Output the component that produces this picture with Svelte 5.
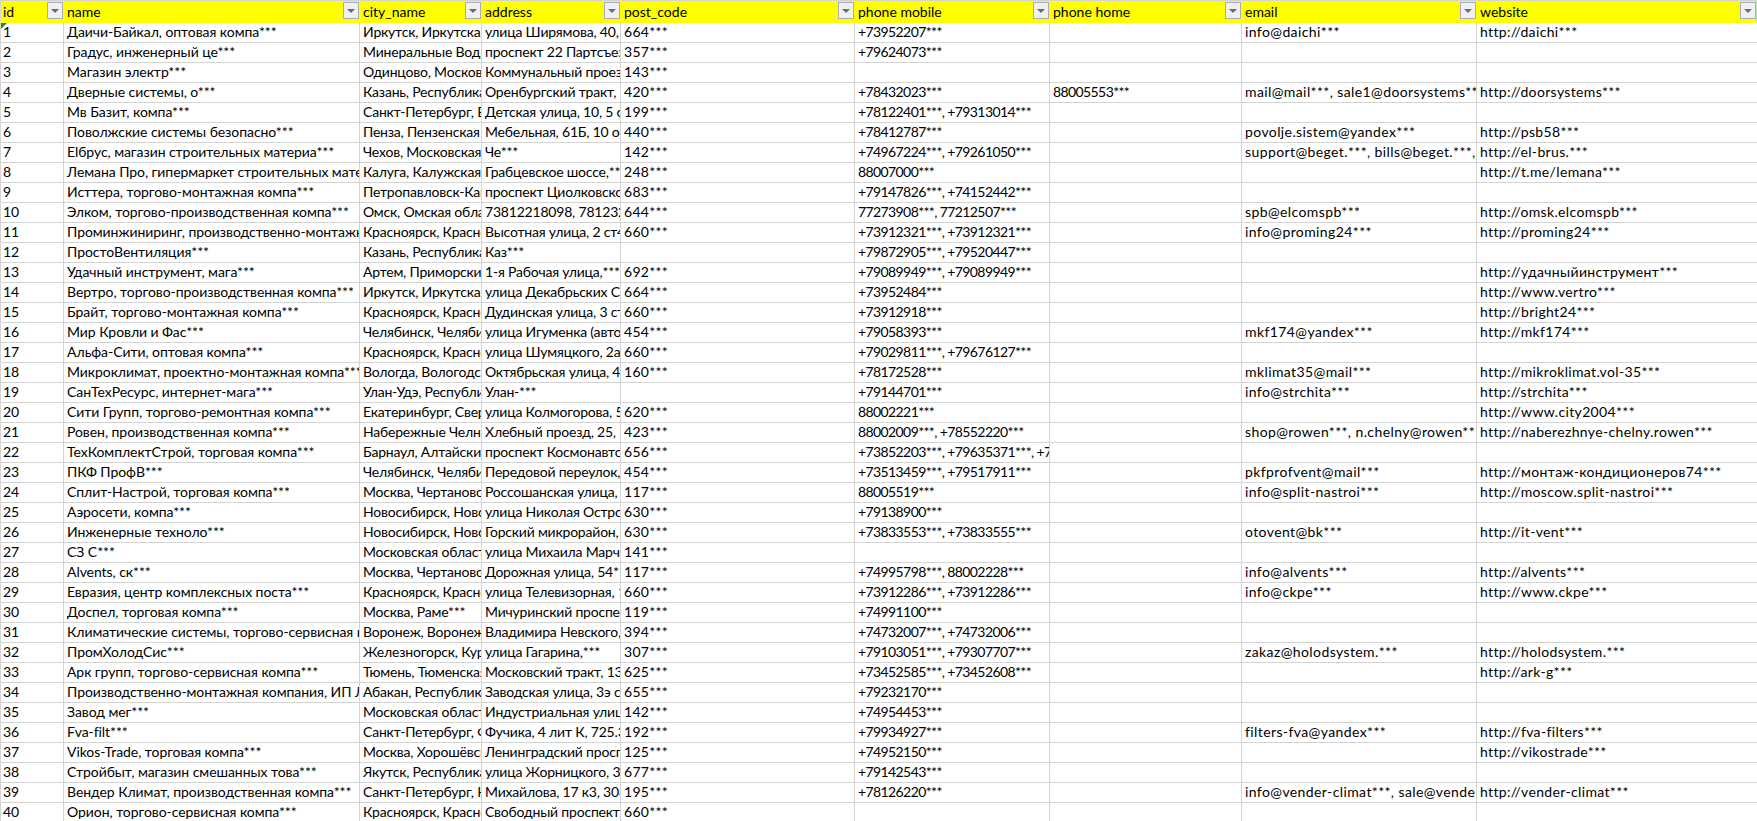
<script lang="ts">
	const columns = [
		{ key: 'id', width: 64, kind: 'plain' },
		{ key: 'name', width: 296, kind: 'title' },
		{ key: 'city_name', width: 122, kind: 'tight' },
		{ key: 'address', width: 139, kind: 'tight' },
		{ key: 'post_code', width: 234, kind: 'code' },
		{ key: 'phone mobile', width: 195, kind: 'phone' },
		{ key: 'phone home', width: 192, kind: 'phone' },
		{ key: 'email', width: 235, kind: 'mail' },
		{ key: 'website', width: 280, kind: 'site' }
	];

	// name | city | address | post | mobile | home | email | website
	const raw = `Даичи-Байкал, оптовая компа***|Иркутск, Иркутская о|улица Ширямова, 40, о|664***|+73952207***||info@daichi***|http://daichi***
Градус, инженерный це***|Минеральные Воды|проспект 22 Партсъезд|357***|+79624073***|||
Магазин электр***|Одинцово, Московская|Коммунальный проезд|143***||||
Дверные системы, о***|Казань, Республика Т|Оренбургский тракт, 1|420***|+78432023***|88005553***|mail@mail***, sale1@doorsystems***|http://doorsystems***
Мв Базит, компа***|Санкт-Петербург, В|Детская улица, 10, 5 ст|199***|+78122401***, +79313014***|||
Поволжские системы безопасно***|Пенза, Пензенская об|Мебельная, 61Б, 10 оф|440***|+78412787***||povolje.sistem@yandex***|http://psb58***
Elбрус, магазин строительных материа***|Чехов, Московская о|Че***|142***|+74967224***, +79261050***||support@beget.***, bills@beget.***, |http://el-brus.***
Лемана Про, гипермаркет строительных матер|Калуга, Калужская о|Грабцевское шоссе,***|248***|88007000***|||http://t.me/lemana***
Исттера, торгово-монтажная компа***|Петропавловск-Камч|проспект Циолковского|683***|+79147826***, +74152442***|||
Элком, торгово-производственная компа***|Омск, Омская област|73812218098, 78123208|644***|77273908***, 77212507***||spb@elcomspb***|http://omsk.elcomspb***
Проминжиниринг, производственно-монтажная|Красноярск, Красноя|Высотная улица, 2 ст4|660***|+73912321***, +73912321***||info@proming24***|http://proming24***
ПростоВентиляция***|Казань, Республика Т|Каз***||+79872905***, +79520447***|||
Удачный инструмент, мага***|Артем, Приморский к|1-я Рабочая улица,***|692***|+79089949***, +79089949***|||http://удачныйинструмент***
Вертро, торгово-производственная компа***|Иркутск, Иркутская о|улица Декабрьских Со|664***|+73952484***|||http://www.vertro***
Брайт, торгово-монтажная компа***|Красноярск, Красноя|Дудинская улица, 3 ст|660***|+73912918***|||http://bright24***
Мир Кровли и Фас***|Челябинск, Челябинс|улица Игуменка (автов|454***|+79058393***||mkf174@yandex***|http://mkf174***
Альфа-Сити, оптовая компа***|Красноярск, Красноя|улица Шумяцкого, 2а,|660***|+79029811***, +79676127***|||
Микроклимат, проектно-монтажная компа***|Вологда, Вологодска|Октябрьская улица, 4 |160***|+78172528***||mklimat35@mail***|http://mikroklimat.vol-35***
СанТехРесурс, интернет-мага***|Улан-Удэ, Республик|Улан-***||+79144701***||info@strchita***|http://strchita***
Сити Групп, торгово-ремонтная компа***|Екатеринбург, Сверд|улица Колмогорова, 5|620***|88002221***|||http://www.city2004***
Ровен, производственная компа***|Набережные Челны|Хлебный проезд, 25, к|423***|88002009***, +78552220***||shop@rowen***, n.chelny@rowen***|http://naberezhnye-chelny.rowen***
ТехКомплектСтрой, торговая компа***|Барнаул, Алтайский к|проспект Космонавтов|656***|+73852203***, +79635371***, +79|||
ПКФ ПрофВ***|Челябинск, Челябинс|Передовой переулок, |454***|+73513459***, +79517911***||pkfprofvent@mail***|http://монтаж-кондиционеров74***
Сплит-Настрой, торговая компа***|Москва, Чертановска|Россошанская улица, |117***|88005519***||info@split-nastroi***|http://moscow.split-nastroi***
Аэросети, компа***|Новосибирск, Новоси|улица Николая Остров|630***|+79138900***|||
Инженерные техноло***|Новосибирск, Новоси|Горский микрорайон, |630***|+73833553***, +73833555***||otovent@bk***|http://it-vent***
СЗ С***|Московская область|улица Михаила Марчу|141***||||
Alvents, ск***|Москва, Чертановска|Дорожная улица, 54***|117***|+74995798***, 88002228***||info@alvents***|http://alvents***
Евразия, центр комплексных поста***|Красноярск, Красноя|улица Телевизорная, 1|660***|+73912286***, +73912286***||info@ckpe***|http://www.ckpe***
Доспел, торговая компа***|Москва, Раме***|Мичуринский проспек|119***|+74991100***|||
Климатические системы, торгово-сервисная ко|Воронеж, Воронежска|Владимира Невского, |394***|+74732007***, +74732006***|||
ПромХолодСис***|Железногорск, Курск|улица Гагарина,***|307***|+79103051***, +79307707***||zakaz@holodsystem.***|http://holodsystem.***
Арк групп, торгово-сервисная компа***|Тюмень, Тюменская о|Московский тракт, 134|625***|+73452585***, +73452608***|||http://ark-g***
Производственно-монтажная компания, ИП Ла|Абакан, Республика Х|Заводская улица, 3э ст|655***|+79232170***|||
Завод мег***|Московская область|Индустриальная улица|142***|+74954453***|||
Fva-filt***|Санкт-Петербург, Фр|Фучика, 4 лит К, 725.3|192***|+79934927***||filters-fva@yandex***|http://fva-filters***
Vikos-Trade, торговая компа***|Москва, Хорошёвский|Ленинградский просп|125***|+74952150***|||http://vikostrade***
Стройбыт, магазин смешанных това***|Якутск, Республика С|улица Жорницкого, 3|677***|+79142543***|||
Вендер Климат, производственная компа***|Санкт-Петербург, Не|Михайлова, 17 к3, 308|195***|+78126220***||info@vender-climat***, sale@vender-climat***|http://vender-climat***
Орион, торгово-сервисная компа***|Красноярск, Красноя|Свободный проспект, |660***||||`;

	const rows = raw.split('\n').map((line, i) => [String(i + 1), ...line.split('|')]);
</script>

<div class="sheet">
	<table>
		<colgroup>
			{#each columns as col}
				<col style="width: {col.width}px" />
			{/each}
		</colgroup>
		<thead>
			<tr>
				{#each columns as col}
					<th>
						<span class="label">{col.key}</span>
						<span class="filter"><i></i></span>
					</th>
				{/each}
			</tr>
		</thead>
		<tbody>
			{#each rows as row, r}
				<tr>
					{#each row as cell, c}
						<td class={columns[c].kind} class:flagged={r === 0 && c === 0}>{cell}</td>
					{/each}
				</tr>
			{/each}
		</tbody>
	</table>
</div>

<style>
	:global(body) {
		background: #fff;
	}

	.sheet {
		width: 1757px;
		height: 821px;
		overflow: hidden;
		font-family: Lato, 'Noto Sans', 'Open Sans', sans-serif;
		font-size: 14px;
		color: #000;
	}

	table {
		table-layout: fixed;
		border-collapse: separate;
		border-spacing: 0;
		width: 1757px;
	}

	th,
	td {
		box-sizing: border-box;
		height: 20px;
		padding: 0 0 2px 3px;
		border-right: 1px solid #d4d4d4;
		border-bottom: 1px solid #d4d4d4;
		white-space: nowrap;
		overflow: hidden;
		line-height: 17px;
		text-align: left;
		font-weight: 400;
	}

	th:first-child,
	td:first-child {
		padding-left: 2px;
		border-left: 1px solid #d4d4d4;
	}

	td:last-child {
		border-right: none;
	}

	th {
		position: relative;
		height: 21px;
		padding-bottom: 0;
		line-height: 21px;
		background: #ffff00;
		border-top: 1px solid #d4d4d4;
		border-right-color: #ffff00;
		border-bottom-color: #ffff00;
	}

	th:last-child {
		border-right-color: #b9e8a8;
	}

	td.title {
		letter-spacing: -0.06px;
	}

	td.tight {
		letter-spacing: -0.2px;
	}

	td.code {
		letter-spacing: 0.3px;
	}

	td.phone {
		letter-spacing: -0.6px;
	}

	td.mail {
		letter-spacing: 0.4px;
	}

	td.site {
		letter-spacing: 0.35px;
	}

	.label {
		display: block;
	}

	.filter {
		position: absolute;
		top: 1px;
		right: 0;
		box-sizing: border-box;
		width: 16px;
		height: 17px;
		background: #f0f0f2;
		border: 1px solid #a9aeb8;
	}

	.filter i {
		position: absolute;
		left: 3px;
		top: 6px;
		width: 0;
		height: 0;
		border-left: 4px solid transparent;
		border-right: 4px solid transparent;
		border-top: 4px solid #6c6c6c;
	}

	td.flagged {
		position: relative;
	}

	td.flagged::before {
		content: '';
		position: absolute;
		left: 0;
		top: 0;
		border-top: 6px solid #1e8a3a;
		border-right: 6px solid transparent;
	}
</style>
